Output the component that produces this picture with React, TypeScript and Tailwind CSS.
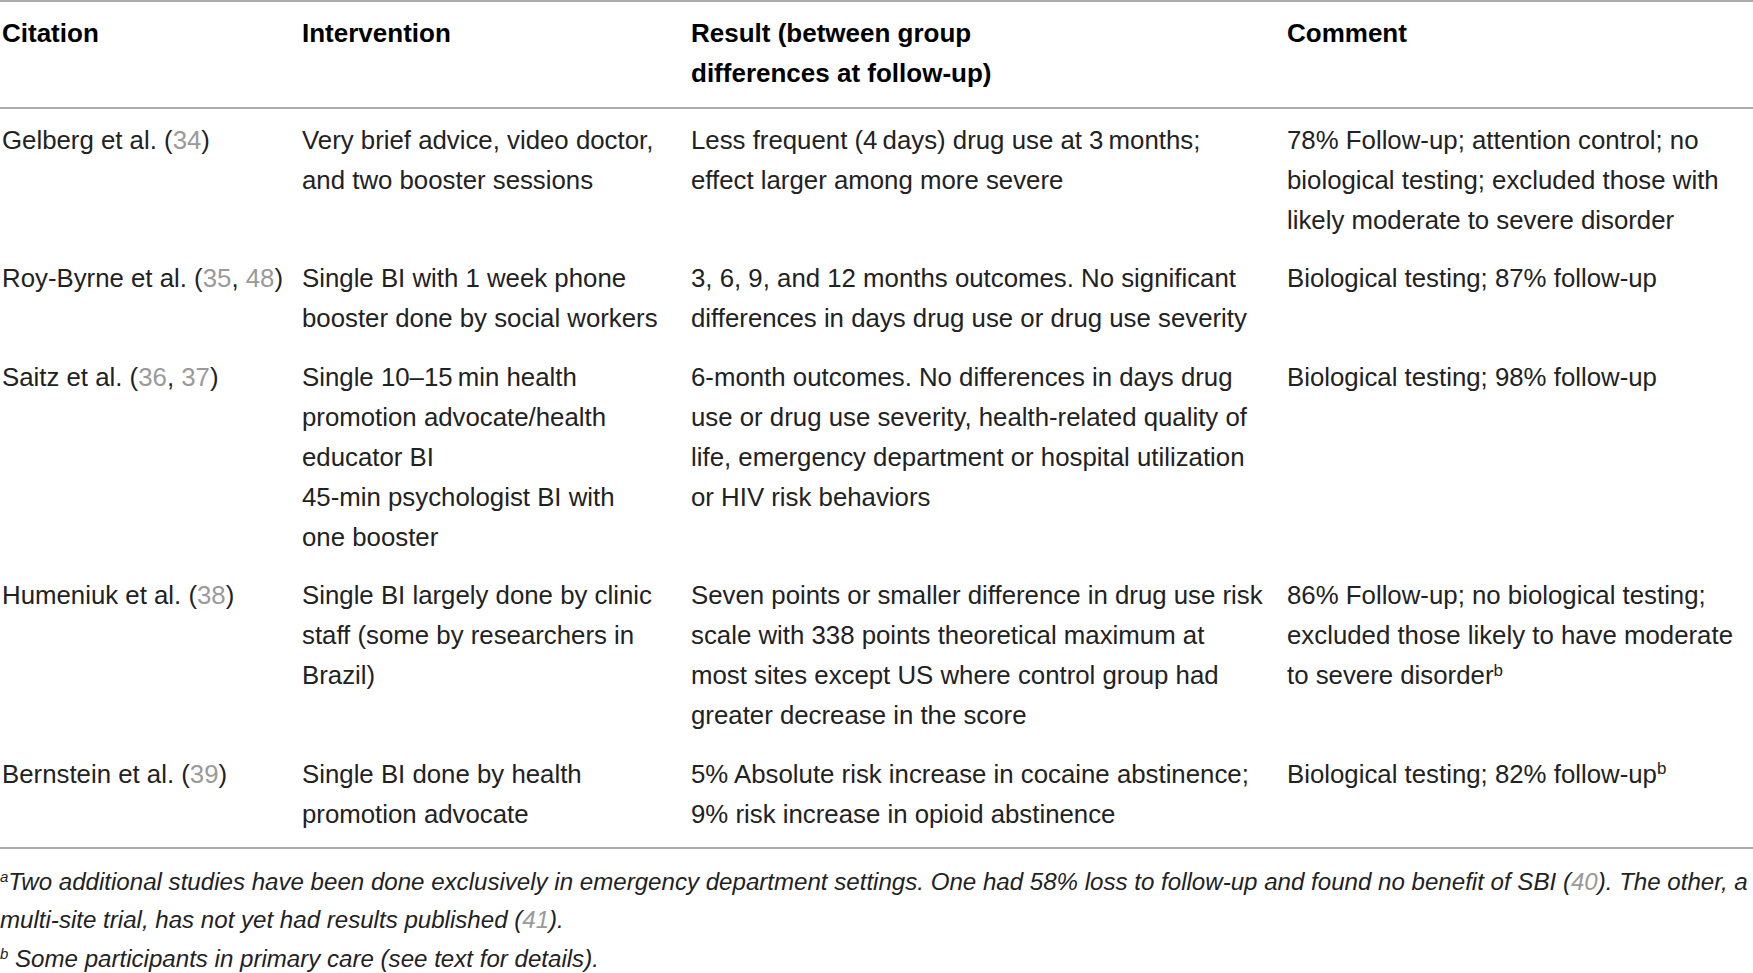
import React from "react";

type Line = React.ReactNode;
type Row = { cite: Line; intervention: Line[]; result: Line[]; comment: Line[] };

const Ref = ({ children }: { children: React.ReactNode }) => (
  <span className="text-[#9a9a9a]">{children}</span>
);

const Sup = ({ children }: { children: React.ReactNode }) => (
  <sup className="text-[17px]">{children}</sup>
);

const NoteMark = ({ children }: { children: React.ReactNode }) => (
  <sup className="text-[15px]">{children}</sup>
);

const rows: Row[] = [
  {
    cite: (
      <>
        Gelberg et al. (<Ref>34</Ref>)
      </>
    ),
    intervention: ["Very brief advice, video doctor,", "and two booster sessions"],
    result: ["Less frequent (4\u2009days) drug use at 3\u2009months;", "effect larger among more severe"],
    comment: [
      "78% Follow-up; attention control; no",
      "biological testing; excluded those with",
      "likely moderate to severe disorder",
    ],
  },
  {
    cite: (
      <>
        Roy-Byrne et al. (<Ref>35</Ref>, <Ref>48</Ref>)
      </>
    ),
    intervention: ["Single BI with 1 week phone", "booster done by social workers"],
    result: [
      "3, 6, 9, and 12 months outcomes. No significant",
      "differences in days drug use or drug use severity",
    ],
    comment: ["Biological testing; 87% follow-up"],
  },
  {
    cite: (
      <>
        Saitz et al. (<Ref>36</Ref>, <Ref>37</Ref>)
      </>
    ),
    intervention: [
      "Single 10\u201315\u2009min health",
      "promotion advocate/health",
      "educator BI",
      "45-min psychologist BI with",
      "one booster",
    ],
    result: [
      "6-month outcomes. No differences in days drug",
      "use or drug use severity, health-related quality of",
      "life, emergency department or hospital utilization",
      "or HIV risk behaviors",
    ],
    comment: ["Biological testing; 98% follow-up"],
  },
  {
    cite: (
      <>
        Humeniuk et al. (<Ref>38</Ref>)
      </>
    ),
    intervention: ["Single BI largely done by clinic", "staff (some by researchers in", "Brazil)"],
    result: [
      "Seven points or smaller difference in drug use risk",
      "scale with 338 points theoretical maximum at",
      "most sites except US where control group had",
      "greater decrease in the score",
    ],
    comment: [
      "86% Follow-up; no biological testing;",
      "excluded those likely to have moderate",
      <>
        to severe disorder<Sup>b</Sup>
      </>,
    ],
  },
  {
    cite: (
      <>
        Bernstein et al. (<Ref>39</Ref>)
      </>
    ),
    intervention: ["Single BI done by health", "promotion advocate"],
    result: ["5% Absolute risk increase in cocaine abstinence;", "9% risk increase in opioid abstinence"],
    comment: [
      <>
        Biological testing; 82% follow-up<Sup>b</Sup>
      </>,
    ],
  },
];

const cols = "grid grid-cols-[300px_389px_596px_1fr]";

function Lines({ lines }: { lines: Line[] }) {
  return (
    <div className="pl-[2px]">
      {lines.map((l, i) => (
        <div key={i} className="whitespace-nowrap">
          {l}
        </div>
      ))}
    </div>
  );
}

export default function App() {
  return (
    <div className="h-[973px] w-[1753px] overflow-hidden bg-white font-['Liberation_Sans',Arial,sans-serif] text-[#222]">
      {/* header */}
      <div className={`${cols} border-t-2 border-[#ababab] pt-[11px] pb-[14px] text-[26px] font-bold leading-[40px] text-black`}>
        <Lines lines={["Citation"]} />
        <Lines lines={["Intervention"]} />
        <Lines lines={["Result (between group", "differences at follow-up)"]} />
        <Lines lines={["Comment"]} />
      </div>

      {/* body */}
      <div className="border-y-2 border-[#ababab] pt-[1px] pb-[4px] text-[25.8px] leading-[40px]">
        {rows.map((r, i) => (
          <div key={i} className={`${cols} pt-[9.5px] pb-[9px]`}>
            <Lines lines={[r.cite]} />
            <Lines lines={r.intervention} />
            <Lines lines={r.result} />
            <Lines lines={r.comment} />
          </div>
        ))}
      </div>

      {/* footnotes */}
      <div className="pt-[14px] text-[24.1px] italic leading-[38.5px] whitespace-nowrap">
        <div>
          <NoteMark>a</NoteMark>Two additional studies have been done exclusively in emergency department settings. One had
          58% loss to follow-up and found no benefit of SBI (<Ref>40</Ref>). The other, a
        </div>
        <div>
          multi-site trial, has not yet had results published (<Ref>41</Ref>).
        </div>
        <div>
          <NoteMark>b</NoteMark> Some participants in primary care (see text for details).
        </div>
      </div>
    </div>
  );
}
